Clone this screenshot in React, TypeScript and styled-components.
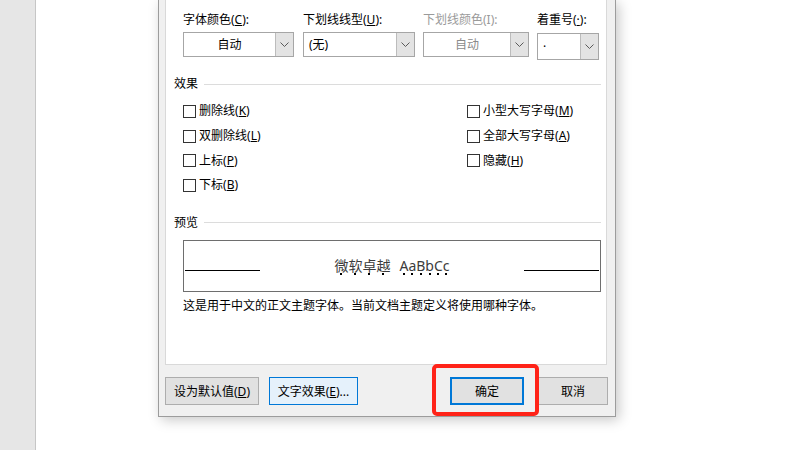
import styled, { createGlobalStyle } from "styled-components";

const GlobalStyle = createGlobalStyle`
  html, body {
    margin: 0;
    padding: 0;
    background: #fff;
  }
  body {
    font-family: "Noto Sans", "Noto Sans CJK SC", sans-serif;
    font-size: 12px;
    color: #000;
  }
`;

const Screen = styled.div`
  display: flex;
  width: 800px;
  height: 450px;
  overflow: hidden;
  background: #fff;
`;

const Gutter = styled.div`
  flex: none;
  width: 35px;
  background: #e6e6e6;
  border-right: 1px solid #c6c6c6;
`;

const Canvas = styled.div`
  flex: 1;
  padding-left: 122px;
`;

const Dialog = styled.div`
  box-sizing: border-box;
  width: 458px;
  height: 417px;
  display: flex;
  flex-direction: column;
  background: #f0f0f0;
  border: 1px solid #9c9c9c;
  border-top: none;
  padding: 0 8px 11px 6px;
  box-shadow: 3px 3px 12px rgba(0, 0, 0, 0.22);
`;

const Panel = styled.div`
  flex: 1;
  background: #fff;
  border: 1px solid #d9d9d9;
  border-top: none;
  padding: 12px 5px 0 8px;
`;

const FieldRow = styled.div`
  display: grid;
  grid-template-columns: 112px 112px 106px 62px;
  column-gap: 8px;
  padding-left: 9px;
  & > :first-child {
    margin-right: 1px;
  }
`;

const Field = styled.div`
  display: flex;
  flex-direction: column;
  gap: 4px;
`;

const Label = styled.span<{ $disabled?: boolean }>`
  line-height: 16px;
  white-space: nowrap;
  color: ${(p) => (p.$disabled ? "#9a9a9a" : "#000")};
`;

const Combo = styled.div<{ $tall?: boolean }>`
  box-sizing: border-box;
  display: flex;
  height: ${(p) => (p.$tall ? "27px" : "25px")};
  margin-top: ${(p) => (p.$tall ? "1px" : "0")};
  background: #fff;
  border: 1px solid #a6a6a6;
`;

const ComboValue = styled.div<{ $align?: string; $disabled?: boolean }>`
  flex: 1;
  display: flex;
  align-items: center;
  justify-content: ${(p) => (p.$align === "left" ? "flex-start" : "center")};
  padding-left: ${(p) => (p.$align === "left" ? "5px" : "0")};
  color: ${(p) => (p.$disabled ? "#8a8a8a" : "#000")};
  line-height: 16px;
`;

const ComboArrow = styled.div`
  flex: none;
  width: 17px;
  display: flex;
  align-items: center;
  justify-content: center;
  background: #e3e3e3;
  border-left: 1px solid #bcbcbc;
`;

const SectionHead = styled.div<{ $gap: number }>`
  display: flex;
  align-items: center;
  margin-top: ${(p) => p.$gap}px;
  line-height: 16px;
  &::after {
    content: "";
    flex: 1;
    height: 1px;
    margin-left: 6px;
    background: #dcdcdc;
  }
`;

const CheckGrid = styled.div`
  display: grid;
  grid-template-columns: 284px auto;
  grid-auto-rows: 24.7px;
  margin-top: 7px;
  padding-left: 9px;
`;

const CheckItem = styled.label`
  display: flex;
  align-items: center;
  gap: 3px;
  line-height: 16px;
  white-space: nowrap;
`;

const Box = styled.span`
  box-sizing: border-box;
  flex: none;
  width: 13px;
  height: 13px;
  background: #fff;
  border: 1px solid #333;
`;

const PreviewBox = styled.div`
  box-sizing: border-box;
  display: flex;
  align-items: flex-start;
  height: 52px;
  margin: 9px 0 0 9px;
  padding: 0 1px;
  border: 1px solid #6e6e6e;
`;

const Rule = styled.div`
  flex: none;
  width: 75px;
  height: 1px;
  margin-top: 29px;
  background: #000;
`;

const Sample = styled.div`
  flex: 1;
  display: flex;
  justify-content: center;
  gap: 9px;
  margin-top: 15px;
  font-size: 14px;
  line-height: 20px;
  color: #3c3c3c;
`;

const Char = styled.span`
  position: relative;
  display: inline-block;
  &::after {
    content: "";
    position: absolute;
    left: 50%;
    bottom: 1px;
    width: 2px;
    height: 2px;
    margin-left: -1px;
    background: #000;
  }
`;

const Note = styled.p`
  margin: 6px 0 0;
  padding-left: 9px;
  line-height: 16px;
`;

const ButtonRow = styled.div`
  display: flex;
  align-items: center;
  margin-top: 12px;
  margin-right: -1px;
`;

const Spacer = styled.div`
  flex: 1;
`;

const Button = styled.button<{ $w: number; $variant?: "hover" | "primary" }>`
  box-sizing: border-box;
  width: ${(p) => p.$w}px;
  height: 28px;
  padding: 0;
  font-family: inherit;
  font-size: 12px;
  color: #000;
  background: ${(p) => (p.$variant === "hover" ? "#e5f1fb" : "#e1e1e1")};
  border: ${(p) =>
    p.$variant === "primary"
      ? "2px solid #0078d7"
      : p.$variant === "hover"
      ? "1px solid #0078d7"
      : "1px solid #adadad"};
`;

const OkWrap = styled.div`
  position: relative;
  display: flex;
  margin-right: 14px;
`;

const Highlight = styled.div`
  position: absolute;
  left: -18px;
  top: -13px;
  box-sizing: border-box;
  width: 107px;
  height: 52px;
  border: 4px solid #ff2318;
  border-radius: 5px;
  pointer-events: none;
`;

const Chevron = () => (
  <svg width="9" height="5" viewBox="0 0 9 5">
    <path d="M0.5 0.5 L4.5 4.5 L8.5 0.5" fill="none" stroke="#5a5a5a" strokeWidth="1" />
  </svg>
);

const dotted = (s: string) => s.split("").map((c, i) => <Char key={i}>{c}</Char>);

const Check = ({ text, keyChar }: { text: string; keyChar: string }) => (
  <CheckItem>
    <Box />
    <span>
      {text}(<u>{keyChar}</u>)
    </span>
  </CheckItem>
);

export default function App() {
  return (
    <>
      <GlobalStyle />
      <Screen>
        <Gutter />
        <Canvas>
          <Dialog>
            <Panel>
              <FieldRow>
                <Field>
                  <Label>
                    字体颜色(<u>C</u>):
                  </Label>
                  <Combo>
                    <ComboValue>自动</ComboValue>
                    <ComboArrow>
                      <Chevron />
                    </ComboArrow>
                  </Combo>
                </Field>
                <Field>
                  <Label>
                    下划线线型(<u>U</u>):
                  </Label>
                  <Combo>
                    <ComboValue $align="left">(无)</ComboValue>
                    <ComboArrow>
                      <Chevron />
                    </ComboArrow>
                  </Combo>
                </Field>
                <Field>
                  <Label $disabled>下划线颜色(I):</Label>
                  <Combo>
                    <ComboValue $disabled>自动</ComboValue>
                    <ComboArrow>
                      <Chevron />
                    </ComboArrow>
                  </Combo>
                </Field>
                <Field>
                  <Label>
                    着重号(<u>·</u>):
                  </Label>
                  <Combo $tall>
                    <ComboValue $align="left">·</ComboValue>
                    <ComboArrow>
                      <Chevron />
                    </ComboArrow>
                  </Combo>
                </Field>
              </FieldRow>

              <SectionHead $gap={16}>效果</SectionHead>
              <CheckGrid>
                <Check text="删除线" keyChar="K" />
                <Check text="小型大写字母" keyChar="M" />
                <Check text="双删除线" keyChar="L" />
                <Check text="全部大写字母" keyChar="A" />
                <Check text="上标" keyChar="P" />
                <Check text="隐藏" keyChar="H" />
                <Check text="下标" keyChar="B" />
              </CheckGrid>

              <SectionHead $gap={17}>预览</SectionHead>
              <PreviewBox>
                <Rule />
                <Sample>
                  <span>{dotted("微软卓越")}</span>
                  <span>{dotted("AaBbCc")}</span>
                </Sample>
                <Rule />
              </PreviewBox>
              <Note>这是用于中文的正文主题字体。当前文档主题定义将使用哪种字体。</Note>
            </Panel>

            <ButtonRow>
              <Button $w={94}>
                设为默认值(<u>D</u>)
              </Button>
              <Button $w={89} $variant="hover" style={{ marginLeft: 10 }}>
                文字效果(<u>E</u>)...
              </Button>
              <Spacer />
              <OkWrap>
                <Button $w={74} $variant="primary">
                  确定
                </Button>
                <Highlight />
              </OkWrap>
              <Button $w={70}>取消</Button>
            </ButtonRow>
          </Dialog>
        </Canvas>
      </Screen>
    </>
  );
}
